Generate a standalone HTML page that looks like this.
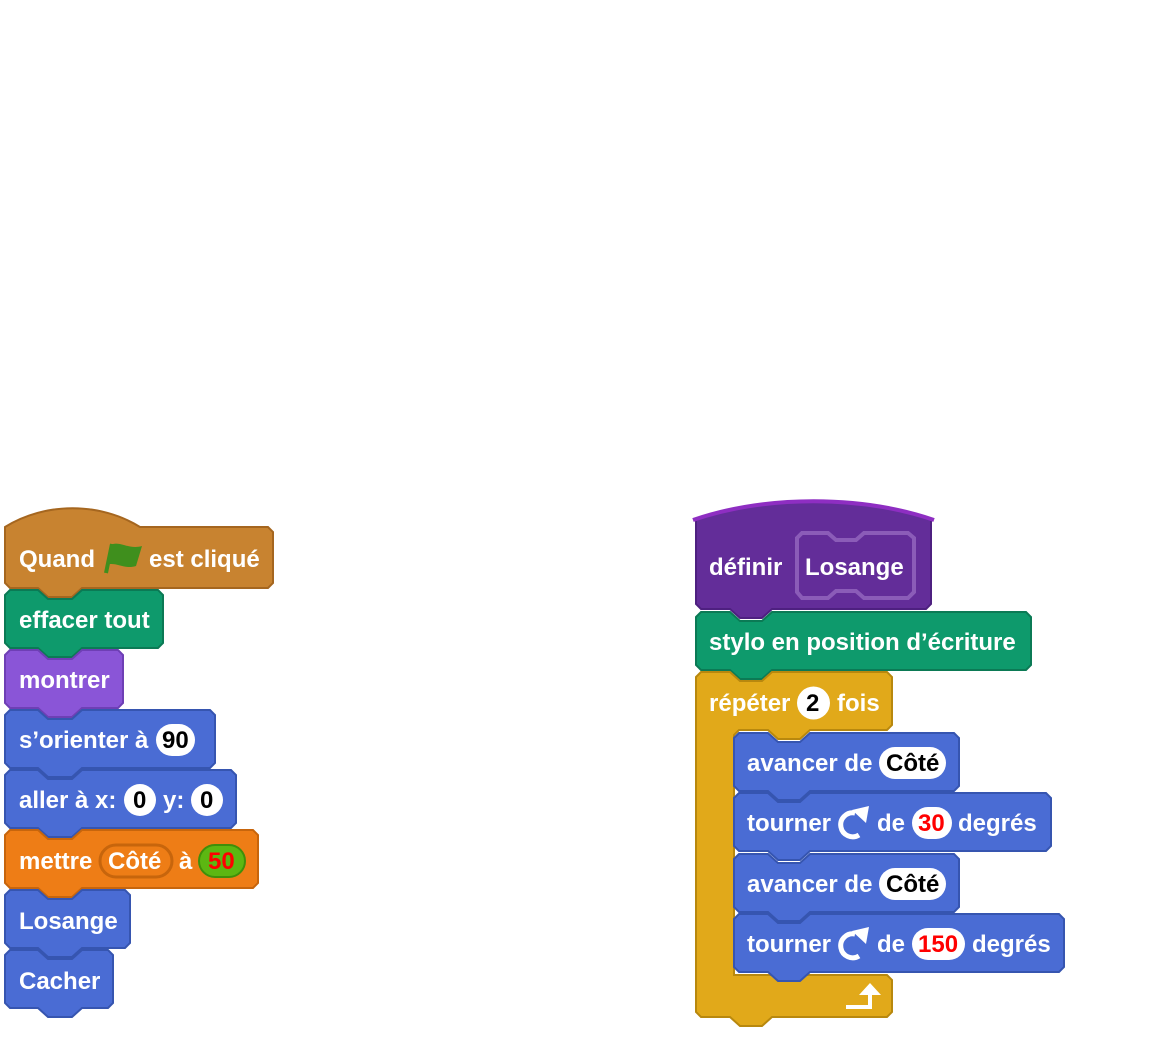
<!DOCTYPE html>
<html><head><meta charset="utf-8">
<style>
html,body{margin:0;padding:0;background:#fff;}
svg{display:block;}
text{font-family:"Liberation Sans",Arial,sans-serif;font-weight:bold;font-size:24px;fill:#fff;}
.b{fill:#000}
.r{fill:#f00}
</style></head><body>
<svg width="1160" height="1048" viewBox="0 0 1160 1048" xmlns="http://www.w3.org/2000/svg">

<g transform="translate(5,508)">
<path d="M0,19 C40,-6 95,-6 135,19 L263,19 L268,24 L268,75 L263,80 L77,80 L67,89 L43,89 L33,80 L5,80 L0,75 Z" fill="#C88330" stroke="#A5661F" stroke-width="2"/>
</g>
<text x="19" y="567">Quand</text>
<path d="M106,573 L112,544" stroke="#3F8F1D" stroke-width="4"/>
<path d="M110,545 C120,540 128,550 142,546 L136,566 C124,570 116,561 106,565 Z" fill="#3F8F1D"/>
<text x="149" y="567">est cliqué</text>

<g transform="translate(5,590)">
<path d="M0,5 L5,0 L33,0 L43,9 L67,9 L77,0 L153,0 L158,5 L158,53 L153,58 L77,58 L67,67 L43,67 L33,58 L5,58 L0,53 Z" fill="#0E9A6C" stroke="#0B7A55" stroke-width="2"/>
</g>
<text x="19" y="628">effacer tout</text>

<g transform="translate(5,650)">
<path d="M0,5 L5,0 L33,0 L43,9 L67,9 L77,0 L113,0 L118,5 L118,53 L113,58 L77,58 L67,67 L43,67 L33,58 L5,58 L0,53 Z" fill="#8A55D7" stroke="#6E3FB5" stroke-width="2"/>
</g>
<text x="19" y="688">montrer</text>

<g transform="translate(5,710)">
<path d="M0,5 L5,0 L33,0 L43,9 L67,9 L77,0 L205,0 L210,5 L210,53 L205,58 L77,58 L67,67 L43,67 L33,58 L5,58 L0,53 Z" fill="#4A6CD4" stroke="#3655B0" stroke-width="2"/>
</g>
<text x="19" y="748">s’orienter à</text>
<rect x="156" y="724" width="39" height="32" rx="16" fill="#fff"/>
<text x="162" y="748" class="b">90</text>

<g transform="translate(5,770)">
<path d="M0,5 L5,0 L33,0 L43,9 L67,9 L77,0 L226,0 L231,5 L231,53 L226,58 L77,58 L67,67 L43,67 L33,58 L5,58 L0,53 Z" fill="#4A6CD4" stroke="#3655B0" stroke-width="2"/>
</g>
<text x="19" y="808">aller à x:</text>
<rect x="124" y="784" width="32" height="32" rx="16" fill="#fff"/>
<text x="133" y="808" class="b">0</text>
<text x="163" y="808">y:</text>
<rect x="191" y="784" width="32" height="32" rx="16" fill="#fff"/>
<text x="200" y="808" class="b">0</text>

<g transform="translate(5,830)">
<path d="M0,5 L5,0 L33,0 L43,9 L67,9 L77,0 L248,0 L253,5 L253,53 L248,58 L77,58 L67,67 L43,67 L33,58 L5,58 L0,53 Z" fill="#EE7D16" stroke="#C7650C" stroke-width="2"/>
</g>
<text x="19" y="869">mettre</text>
<rect x="100" y="845" width="72" height="32" rx="16" fill="#EE7D16" stroke="#C7650C" stroke-width="3"/>
<text x="108" y="869">Côté</text>
<text x="179" y="869">à</text>
<rect x="199" y="845" width="46" height="32" rx="16" fill="#5CB712" stroke="#3F8F0A" stroke-width="2"/>
<text x="208" y="869" class="r">50</text>

<g transform="translate(5,890)">
<path d="M0,5 L5,0 L33,0 L43,9 L67,9 L77,0 L120,0 L125,5 L125,53 L120,58 L77,58 L67,67 L43,67 L33,58 L5,58 L0,53 Z" fill="#4A6CD4" stroke="#3655B0" stroke-width="2"/>
</g>
<text x="19" y="929">Losange</text>

<g transform="translate(5,950)">
<path d="M0,5 L5,0 L33,0 L43,9 L67,9 L77,0 L103,0 L108,5 L108,53 L103,58 L77,58 L67,67 L43,67 L33,58 L5,58 L0,53 Z" fill="#4A6CD4" stroke="#3655B0" stroke-width="2"/>
</g>
<text x="19" y="989">Cacher</text>

<g transform="translate(696,500)">
<path d="M0,20 C70,-5 165,-5 235,20 L235,104 L230,109 L76,109 L66,118 L44,118 L34,109 L5,109 L0,104 Z" fill="#632D99" stroke="#4E2080" stroke-width="2"/>
<path d="M-3,20 C70,-5 165,-5 238,20" fill="none" stroke="#8E2EC2" stroke-width="4"/>
</g>
<text x="709" y="575">définir</text>
<path d="M797,538 L802,533 L828,533 L836,540 L856,540 L864,533 L908,533 L914,538 L914,592 L908,598 L864,598 L856,591 L836,591 L828,598 L802,598 L797,592 Z" fill="#632D99" stroke="#8B5CB8" stroke-width="4"/>
<text x="805" y="575">Losange</text>

<g transform="translate(696,612)">
<path d="M0,5 L5,0 L34,0 L44,9 L66,9 L76,0 L330,0 L335,5 L335,53 L330,58 L76,58 L66,67 L44,67 L34,58 L5,58 L0,53 Z" fill="#0E9A6C" stroke="#0B7A55" stroke-width="2"/>
</g>
<text x="709" y="650">stylo en position d’écriture</text>

<g transform="translate(696,672)">
<path d="M0,5 L5,0 L34,0 L44,9 L66,9 L76,0 L191,0 L196,5 L196,53 L191,58 L114,58 L104,67 L82,67 L72,58 L43,58 L38,63 L38,303 L191,303 L196,308 L196,340 L191,345 L76,345 L66,354 L44,354 L34,345 L5,345 L0,340 Z" fill="#E1A91A" stroke="#B8880E" stroke-width="2"/>
</g>
<text x="709" y="711">répéter</text>
<circle cx="813.5" cy="703" r="16.5" fill="#fff"/>
<text x="806" y="711" class="b">2</text>
<text x="837" y="711">fois</text>
<path d="M846,1007 L870,1007 L870,994" fill="none" stroke="#fff" stroke-width="4"/>
<path d="M859,995 L870,983 L881,995 Z" fill="#fff"/>

<g transform="translate(734,733)">
<path d="M0,5 L5,0 L34,0 L44,9 L66,9 L76,0 L220,0 L225,5 L225,53 L220,58 L76,58 L66,67 L44,67 L34,58 L5,58 L0,53 Z" fill="#4A6CD4" stroke="#3655B0" stroke-width="2"/>
</g>
<text x="747" y="771">avancer de</text>
<rect x="879" y="747" width="67" height="32" rx="16" fill="#fff"/>
<text x="886" y="771" class="b">Côté</text>

<g transform="translate(734,793)">
<path d="M0,5 L5,0 L34,0 L44,9 L66,9 L76,0 L312,0 L317,5 L317,53 L312,58 L76,58 L66,67 L44,67 L34,58 L5,58 L0,53 Z" fill="#4A6CD4" stroke="#3655B0" stroke-width="2"/>
</g>
<text x="747" y="831">tourner</text>
<path d="M859,835 A12,12 0 1 1 855,813" fill="none" stroke="#fff" stroke-width="5"/>
<path d="M852,810 L869,806 L866,823 Z" fill="#fff"/>
<text x="877" y="831">de</text>
<rect x="912" y="807" width="40" height="32" rx="16" fill="#fff"/>
<text x="918" y="831" class="r">30</text>
<text x="958" y="831">degrés</text>

<g transform="translate(734,854)">
<path d="M0,5 L5,0 L34,0 L44,9 L66,9 L76,0 L220,0 L225,5 L225,53 L220,58 L76,58 L66,67 L44,67 L34,58 L5,58 L0,53 Z" fill="#4A6CD4" stroke="#3655B0" stroke-width="2"/>
</g>
<text x="747" y="892">avancer de</text>
<rect x="879" y="868" width="67" height="32" rx="16" fill="#fff"/>
<text x="886" y="892" class="b">Côté</text>

<g transform="translate(734,914)">
<path d="M0,5 L5,0 L34,0 L44,9 L66,9 L76,0 L325,0 L330,5 L330,53 L325,58 L76,58 L66,67 L44,67 L34,58 L5,58 L0,53 Z" fill="#4A6CD4" stroke="#3655B0" stroke-width="2"/>
</g>
<text x="747" y="952">tourner</text>
<path d="M859,956 A12,12 0 1 1 855,934" fill="none" stroke="#fff" stroke-width="5"/>
<path d="M852,931 L869,927 L866,944 Z" fill="#fff"/>
<text x="877" y="952">de</text>
<rect x="912" y="928" width="53" height="32" rx="16" fill="#fff"/>
<text x="918" y="952" class="r">150</text>
<text x="972" y="952">degrés</text>

</svg>
</body></html>
